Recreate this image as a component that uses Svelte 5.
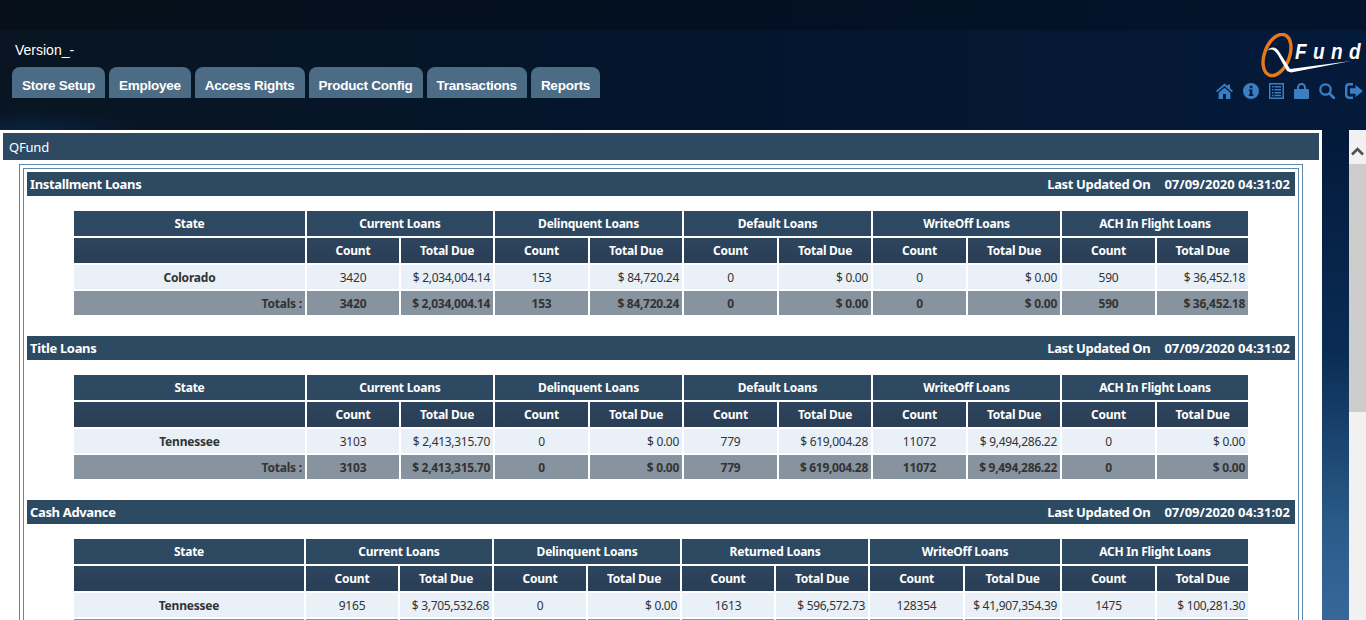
<script>
  const tabs = ['Store Setup', 'Employee', 'Access Rights', 'Product Config', 'Transactions', 'Reports'];
  const colsA = [231, 92, 92, 93, 92, 93, 92, 93, 92, 93, 91];
  const colsB = [230, 92, 92, 92, 92, 92, 92, 93, 95, 93, 91];

  const sections = [
    {
      title: 'Installment Loans',
      cols: colsA,
      groups: ['Current Loans', 'Delinquent Loans', 'Default Loans', 'WriteOff Loans', 'ACH In Flight Loans'],
      state: 'Colorado',
      values: ['3420', '$ 2,034,004.14', '153', '$ 84,720.24', '0', '$ 0.00', '0', '$ 0.00', '590', '$ 36,452.18']
    },
    {
      title: 'Title Loans',
      cols: colsA,
      groups: ['Current Loans', 'Delinquent Loans', 'Default Loans', 'WriteOff Loans', 'ACH In Flight Loans'],
      state: 'Tennessee',
      values: ['3103', '$ 2,413,315.70', '0', '$ 0.00', '779', '$ 619,004.28', '11072', '$ 9,494,286.22', '0', '$ 0.00']
    },
    {
      title: 'Cash Advance',
      cols: colsB,
      groups: ['Current Loans', 'Delinquent Loans', 'Returned Loans', 'WriteOff Loans', 'ACH In Flight Loans'],
      state: 'Tennessee',
      values: ['9165', '$ 3,705,532.68', '0', '$ 0.00', '1613', '$ 596,572.73', '128354', '$ 41,907,354.39', '1475', '$ 100,281.30']
    }
  ];
</script>

<div class="page">
  <header class="top">
    <div class="left">
      <div class="version">Version_-</div>
      <nav class="tabs">
        {#each tabs as tab}
          <span class="tab">{tab}</span>
        {/each}
      </nav>
    </div>
    <div class="right">
      <div class="logo">
        <svg width="102" height="49" viewBox="0 0 102 49">
          <ellipse cx="17" cy="22" rx="12.500" ry="21.500" transform="rotate(21 17 22)" fill="none" stroke="#e8781a" stroke-width="3.400" />
          <path d="M7 18 C11 13 16 13 20 20 L30 36 L91 28 L31 39.500 L27 38 L18 22 C15 17 11 15 7 18 Z" fill="#fff" />
        </svg>
        <span class="fund">Fund</span>
      </div>
      <div class="icons">
        <svg width="17" height="16" viewBox="0 0 17 16"><path d="M8.500 .5 L0 8 L1.200 9.300 L8.500 3 L15.800 9.300 L17 8 L14 5.300 V1.500 H11.700 V3.300 Z M2.600 9.800 V16 H7 V11 H10 V16 H14.400 V9.800 L8.500 4.700 Z" /></svg>
        <svg width="16" height="16" viewBox="0 0 16 16"><path fill-rule="evenodd" d="M8 0 A8 8 0 1 0 8 16 A8 8 0 1 0 8 0 Z M6.800 2.800 H9.400 V5.200 H6.800 Z M5.800 6.400 H9.400 V11.600 H10.400 V13 H5.800 V11.600 H6.800 V7.800 H5.800 Z" /></svg>
        <svg width="15" height="16" viewBox="0 0 15 16"><path fill-rule="evenodd" d="M0 0 H15 V16 H0 Z M1.500 1.500 V14.500 H13.500 V1.500 Z M3 3 H4.500 V4.500 H3 Z M5.500 3 H12 V4.500 H5.500 Z M3 6 H4.500 V7.500 H3 Z M5.500 6 H12 V7.500 H5.500 Z M3 9 H4.500 V10.500 H3 Z M5.500 9 H12 V10.500 H5.500 Z M3 11.800 H4.500 V13.200 H3 Z M5.500 11.800 H12 V13.200 H5.500 Z" /></svg>
        <svg width="15" height="16" viewBox="0 0 15 16"><path fill-rule="evenodd" d="M3 6 V4.500 A4.500 4.500 0 0 1 12 4.500 V6 H14 A1 1 0 0 1 15 7 V15 A1 1 0 0 1 14 16 H1 A1 1 0 0 1 0 15 V7 A1 1 0 0 1 1 6 Z M5 6 H10 V4.500 A2.500 2.500 0 0 0 5 4.500 Z" /></svg>
        <svg width="16" height="16" viewBox="0 0 16 16"><circle cx="6.500" cy="6.500" r="5.200" fill="none" stroke="#3a7fc4" stroke-width="2.200" /><path d="M10.500 10.500 L15 15" fill="none" stroke="#3a7fc4" stroke-width="2.800" stroke-linecap="round" /></svg>
        <svg width="18" height="16" viewBox="0 0 18 16"><path d="M8 1.200 H4 A3 3 0 0 0 1.200 4 V12 A3 3 0 0 0 4 14.800 H8" fill="none" stroke="#3a7fc4" stroke-width="2.400" /><path d="M10.500 2 L18 8 L10.500 14 V10.800 H5 V5.200 H10.500 Z" /></svg>
      </div>
    </div>
  </header>

  <div class="body">
    <main class="content">
      <div class="title">QFund</div>
      <div class="frame">
        <div class="frame-inner">
          {#each sections as s}
            <section>
              <div class="bar">
                <span class="name">{s.title}</span>
                <span class="updated"><span class="name">Last Updated On</span><span>07/09/2020 04:31:02</span></span>
              </div>
              <table>
                <colgroup>
                  {#each s.cols as w}
                    <col style="width: {w}px" />
                  {/each}
                </colgroup>
                <thead>
                  <tr class="h1">
                    <th>State</th>
                    {#each s.groups as g}
                      <th colspan="2">{g}</th>
                    {/each}
                  </tr>
                  <tr class="h2">
                    <th></th>
                    {#each s.groups as g}
                      <th>Count</th>
                      <th>Total Due</th>
                    {/each}
                  </tr>
                </thead>
                <tbody>
                  <tr class="row">
                    <td class="state">{s.state}</td>
                    {#each s.values as v, i}
                      <td class={i % 2 ? 'money' : 'count'}>{v}</td>
                    {/each}
                  </tr>
                  <tr class="totals">
                    <td class="label">Totals :</td>
                    {#each s.values as v, i}
                      <td class={i % 2 ? 'money' : 'count'}>{v}</td>
                    {/each}
                  </tr>
                </tbody>
              </table>
            </section>
          {/each}
        </div>
      </div>
    </main>
    <div class="gutter"></div>
    <div class="scrollbar">
      <div class="arrow">
        <svg width="13" height="9" viewBox="0 0 13 9"><path d="M1 7.500 L6.500 2 L12 7.500" fill="none" stroke="#505050" stroke-width="2.600" /></svg>
      </div>
      <div class="thumb"></div>
    </div>
  </div>
</div>

<style>
  :global(body) {
    margin: 0;
  }

  .page {
    width: 1366px;
    height: 620px;
    overflow: hidden;
    display: flex;
    flex-direction: column;
    font-family: "Noto Sans", sans-serif;
  }

  .top {
    height: 130px;
    flex: none;
    display: flex;
    justify-content: space-between;
    background:
      linear-gradient(180deg, rgba(0, 0, 0, 0.25) 0, rgba(0, 0, 0, 0.25) 30px, transparent 30px),
      radial-gradient(ellipse 110px 20px at 30px 130px, #0a2240, transparent),
      linear-gradient(90deg, #091522 0, #04152c 45%, #041a3a 100%);
  }

  .left {
    padding: 42px 0 0 12px;
    font-family: "Liberation Sans", Arial, sans-serif;
  }

  .version {
    color: #fff;
    font-size: 14px;
    line-height: 16px;
    padding-left: 3px;
    margin-bottom: 9px;
  }

  .tabs {
    display: flex;
    gap: 4px;
  }

  .tab {
    background: #4c6b85;
    color: #fff;
    font-size: 13.500px;
    letter-spacing: -0.25px;
    font-weight: 700;
    height: 31px;
    line-height: 37px;
    padding: 0 10px;
    border-radius: 8px 8px 0 0;
    box-sizing: border-box;
    overflow: hidden;
  }

  .right {
    padding: 33px 3px 0 0;
    display: flex;
    flex-direction: column;
    align-items: flex-end;
  }

  .logo {
    position: relative;
    width: 103px;
    height: 50px;
  }

  .logo svg {
    display: block;
  }

  .fund {
    position: absolute;
    left: 35px;
    top: 6px;
    font: italic 700 19px "Liberation Sans", sans-serif;
    letter-spacing: 6.400px;
    color: #fff;
    transform: scaleY(1.15);
    transform-origin: top left;
  }

  .icons {
    display: flex;
    align-items: center;
    gap: 10px;
    fill: #3a7fc4;
  }

  .icons svg {
    display: block;
  }

  .body {
    flex: 1;
    display: flex;
    min-height: 0;
  }

  .content {
    width: 1322px;
    box-sizing: border-box;
    background: #fff;
    padding: 3px;
  }

  .title {
    background: #2e4a63;
    color: #fff;
    font-size: 13px;
    letter-spacing: -0.2px;
    height: 27px;
    line-height: 28px;
    padding-left: 6px;
  }

  .frame {
    margin: 4px 16px 0 16px;
    border: 1px solid #5f88a8;
    padding: 3px;
    border-bottom: 0;
  }

  .frame-inner {
    border: 1px solid #5f88a8;
    border-bottom: 0;
    padding: 3px;
    height: 470px;
  }

  section {
    margin-bottom: 19px;
  }

  .bar {
    height: 24px;
    background: #2d4a63;
    color: #fff;
    font-size: 13px;
    font-weight: 700;
    line-height: 24px;
    display: flex;
    justify-content: space-between;
    padding: 0 5px 0 3px;
  }

  .name {
    letter-spacing: -0.35px;
  }

  .updated {
    display: flex;
    gap: 14px;
  }

  table {
    table-layout: fixed;
    width: 1178px;
    margin: 13px auto 0;
    border-collapse: separate;
    border-spacing: 2px;
    font-size: 12px;
    color: #333;
  }

  th {
    color: #fff;
    font-weight: 700;
    letter-spacing: -0.25px;
    text-align: center;
    padding: 0;
  }

  .h1 th {
    height: 25px;
    background: linear-gradient(180deg, #2e4a63, #2d4860);
  }

  .h2 th {
    height: 25px;
    background: linear-gradient(180deg, #2d455e, #2a3e55);
  }

  td {
    padding: 0 3px;
    height: 24px;
    white-space: nowrap;
    letter-spacing: -0.2px;
  }

  .row td {
    background: #e9f0f8;
  }

  .totals td {
    background: #87939e;
    font-weight: 700;
  }

  .state {
    text-align: center;
    font-weight: 700;
  }

  .label {
    text-align: right;
  }

  .count {
    text-align: center;
  }

  td.money {
    text-align: right;
    letter-spacing: -0.3px;
  }

  .gutter {
    width: 27px;
    background: linear-gradient(180deg, #03193a 0, #0a2c54 45%, #2a5a88 80%, #38689a 100%);
  }

  .scrollbar {
    width: 17px;
    background: #f1f1f1;
    display: flex;
    flex-direction: column;
  }

  .arrow {
    height: 34px;
    display: flex;
    align-items: center;
    justify-content: center;
    padding-top: 8px;
    box-sizing: border-box;
  }

  .thumb {
    height: 248px;
    background: #cdcdcd;
  }
</style>
